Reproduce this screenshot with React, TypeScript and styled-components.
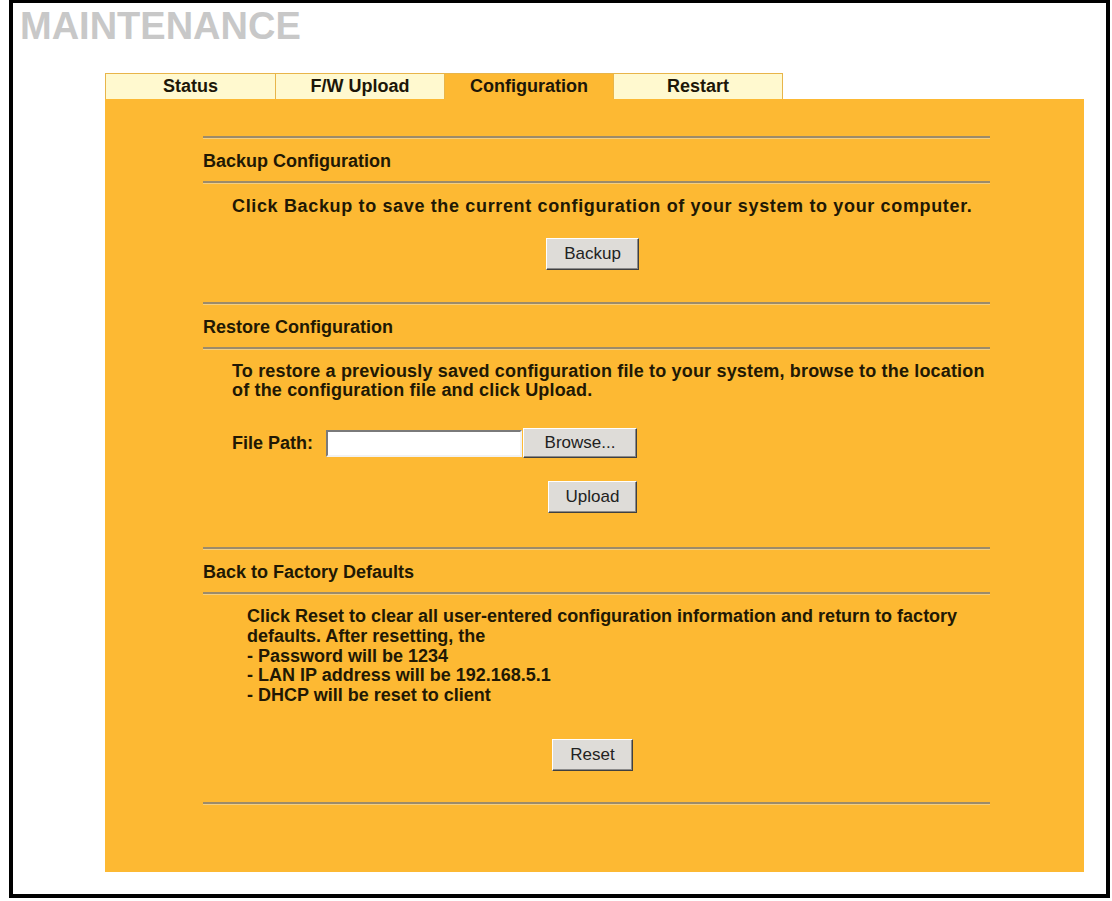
import styled, { createGlobalStyle } from 'styled-components';

const GlobalStyle = createGlobalStyle`
  html, body {
    margin: 0;
    padding: 0;
    background: #fff;
  }
  body {
    font-family: "Liberation Sans", Arial, sans-serif;
  }
`;

const tabs = ['Status', 'F/W Upload', 'Configuration', 'Restart'];

function App() {
  return (
    <Frame>
      <GlobalStyle />
      <Title>MAINTENANCE</Title>
      <TabBar>
        {tabs.map((t) => (
          <Tab key={t} $active={t === 'Configuration'}>
            {t}
          </Tab>
        ))}
      </TabBar>
      <Panel>
        <Rule />
        <Heading>Backup Configuration</Heading>
        <Rule />
        <Text $top={13} $spacing={0.65}>
          Click Backup to save the current configuration of your system to your
          computer.
        </Text>
        <ButtonRow $top={21}>
          <Button>Backup</Button>
        </ButtonRow>
        <Rule $top={32} />
        <Heading>Restore Configuration</Heading>
        <Rule />
        <Text $top={12} $spacing={0.17}>
          To restore a previously saved configuration file to your system,
          browse to the location of the configuration file and click Upload.
        </Text>
        <FileRow>
          <Label>File Path:</Label>
          <FileInput type="text" />
          <BrowseButton>Browse...</BrowseButton>
        </FileRow>
        <ButtonRow $top={23}>
          <Button>Upload</Button>
        </ButtonRow>
        <Rule $top={34} />
        <Heading>Back to Factory Defaults</Heading>
        <Rule />
        <Text $top={12} $indent={44} $wide>
          Click Reset to clear all user-entered configuration information and
          return to factory defaults. After resetting, the
          <br />- Password will be 1234
          <br />- LAN IP address will be 192.168.5.1
          <br />- DHCP will be reset to client
        </Text>
        <ButtonRow $top={33}>
          <Button $pad={17}>Reset</Button>
        </ButtonRow>
        <Rule $top={31} />
      </Panel>
    </Frame>
  );
}

const Frame = styled.div`
  box-sizing: border-box;
  width: 1101px;
  height: 898px;
  margin-left: 9px;
  border: 4px solid #000;
  border-top-width: 3px;
  padding: 5px 0 0;
  display: flex;
  flex-direction: column;
`;

const Title = styled.h1`
  margin: 0 0 28px 7px;
  font-size: 38px;
  line-height: 37px;
  font-weight: bold;
  color: #c8c8c8;
`;

const TabBar = styled.div`
  display: grid;
  grid-template-columns: repeat(4, 1fr);
  width: 678px;
  margin-left: 92px;
  box-sizing: border-box;
  border: 1px solid #e8b54a;
  border-bottom: none;
`;

const Tab = styled.div<{ $active?: boolean }>`
  height: 25px;
  line-height: 25px;
  text-align: center;
  font-size: 18px;
  font-weight: bold;
  color: #1c1608;
  background: ${(p) => (p.$active ? '#fdb933' : '#fff9cf')};
  border-left: 1px solid #e8b54a;
  &:first-child {
    border-left: none;
  }
`;

const Panel = styled.div`
  width: 979px;
  height: 773px;
  margin-left: 92px;
  box-sizing: border-box;
  background: #fdb933;
  padding: 37px 94px 0 98px;
  display: flex;
  flex-direction: column;
`;

const Rule = styled.div<{ $top?: number }>`
  height: 0;
  margin-top: ${(p) => p.$top ?? 0}px;
  border-top: 2px solid #9c8b6a;
  border-bottom: 1px solid #f4cf82;
`;

const Heading = styled.div`
  padding: 12px 0 10px;
  font-size: 18px;
  line-height: 20px;
  font-weight: bold;
  color: #211804;
`;

const Text = styled.div<{
  $top?: number;
  $indent?: number;
  $wide?: boolean;
  $spacing?: number;
}>`
  margin-top: ${(p) => p.$top ?? 0}px;
  padding-left: ${(p) => p.$indent ?? 29}px;
  padding-right: ${(p) => (p.$wide ? 20 : 0)}px;
  font-size: 18px;
  line-height: 19.7px;
  font-weight: bold;
  letter-spacing: ${(p) => p.$spacing ?? 0}px;
  color: #211804;
`;

const ButtonRow = styled.div<{ $top?: number }>`
  display: flex;
  justify-content: center;
  margin-top: ${(p) => p.$top ?? 0}px;
  padding-right: 8px;
`;

const Button = styled.button<{ $pad?: number }>`
  box-sizing: border-box;
  height: 32px;
  padding: 0 ${(p) => p.$pad ?? 17}px;
  font-family: "Liberation Sans", Arial, sans-serif;
  font-size: 17px;
  color: #222;
  background: #dedcd8;
  border: 1px solid;
  border-color: #fff #404040 #404040 #fff;
  box-shadow: inset -1px -1px 0 #8a8a8a;
  cursor: pointer;
`;

const FileRow = styled.div`
  display: flex;
  align-items: center;
  margin-top: 27px;
  padding-left: 29px;
  height: 30px;
`;

const Label = styled.span`
  font-size: 18px;
  font-weight: bold;
  color: #211804;
  margin-right: 13px;
`;

const FileInput = styled.input`
  box-sizing: border-box;
  width: 196px;
  height: 27px;
  background: #fff;
  border: 2px solid;
  border-color: #7a7a7a #f2f2f2 #f2f2f2 #7a7a7a;
  padding: 0 3px;
  outline: none;
`;

const BrowseButton = styled(Button)`
  height: 30px;
  width: 114px;
  margin-left: 1px;
  padding: 0;
`;

export default App;
